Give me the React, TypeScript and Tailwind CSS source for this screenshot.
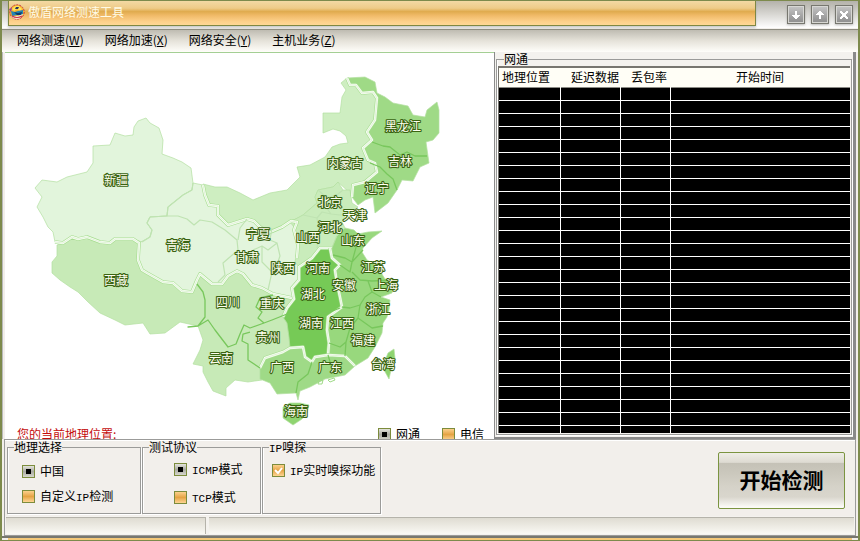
import { useState, type ReactNode } from 'react';
import clsx from 'clsx';

const menus = [
    { title: '网络测速', hotkey: 'W' },
    { title: '网络加速', hotkey: 'X' },
    { title: '网络安全', hotkey: 'Y' },
    { title: '主机业务', hotkey: 'Z' },
];

const regions = [
    {
        // Xinjiang
        fill: '#e2f5dc',
        d: 'M42 180L35 188L42 197L37 207L43 217L48 227L53 232L55 242L63 243L72 237L78 239L87 237L100 242L110 243L115 239L133 239L142 242L150 237L152 230L147 223L150 217L167 216L168 207L183 195L192 190L193 183L191 168L182 162L173 158L162 154L163 140L159 128L150 123L146 118L138 121L134 127L133 135L125 136L115 133L110 145L93 146L93 163L87 172L67 177L57 182Z',
    },
    {
        // Qinghai, Gansu, Ningxia, Shaanxi
        fill: '#e3f5dd',
        d: 'M139 243L150 237L152 230L147 223L150 217L167 216L168 207L183 195L192 190L193 183L203 185L205 195L209 205L218 206L218 215L228 225L247 219L260 224L268 233L282 227L291 221L297 222L294 230L298 245L297 258L299 267L299 280L292 288L294 298L288 299L273 294L262 289L252 285L243 274L237 271L228 276L222 284L212 284L200 274L197 280L192 292L182 291L173 283L163 282L147 273L142 270L138 260Z',
    },
    {
        // Inner Mongolia
        fill: '#ceeec1',
        d: 'M203 184L215 187L227 187L240 193L253 200L270 193L287 190L300 177L297 167L310 165L325 157L332 147L340 144L348 143L346 136L340 131L333 129L323 133L323 113L340 113L342 97L346 90L341 83L347 78L350 85L356 85L362 93L373 92L377 98L375 120L367 132L372 140L363 148L368 160L375 163L377 172L365 182L353 185L352 195L338 182L333 187L318 190L315 197L317 203L303 215L290 222L282 227L268 233L260 227L254 220L247 218L228 225L218 215L218 207L209 205L204 193Z',
    },
    {
        // Beijing, Tianjin, Hebei, Shanxi
        fill: '#c9ecbb',
        d: 'M317 203L315 197L318 190L333 187L338 182L343 190L350 190L352 203L358 207L353 212L346 214L342 222L345 228L337 235L332 248L320 248L312 258L299 267L295 262L298 245L294 227L290 222L303 215Z',
    },
    {
        // Heilongjiang, Jilin, Liaoning
        fill: '#9fda86',
        d: 'M347 78L365 77L375 82L377 93L385 97L393 103L408 106L413 115L425 117L427 110L437 102L439 110L439 133L433 140L426 142L429 163L420 167L417 173L413 181L402 180L397 190L388 203L375 213L373 197L365 200L358 205L352 197L353 185L365 182L377 172L375 163L368 160L363 148L372 140L367 132L375 120L377 98L373 92L362 93L356 85L350 85Z',
    },
    {
        // Tibet, Sichuan, Yunnan, Guizhou, Chongqing
        fill: '#c7eab7',
        d: 'M57 245L63 243L72 238L78 240L87 238L100 242L110 243L115 240L133 240L139 243L138 260L142 270L147 273L163 282L173 283L182 291L192 292L197 282L200 274L212 284L222 284L228 276L237 271L243 274L252 285L262 288L273 294L288 299L294 299L287 308L283 317L287 323L289 337L290 348L283 352L265 358L260 367L262 380L248 382L235 380L226 388L226 396L213 391L208 382L203 372L203 366L193 364L200 350L203 340L198 326L180 322L165 333L150 334L143 323L125 325L115 320L100 313L88 302L78 292L70 287L60 280L52 273L52 262L57 256Z',
    },
    {
        // Shandong, Jiangsu, Anhui, Shanghai, Zhejiang, Jiangxi, Fujian
        fill: '#98d87d',
        d: 'M332 248L337 236L345 228L354 230L358 234L368 232L382 231L372 238L363 248L362 252L367 260L377 266L385 279L394 280L392 293L381 297L390 300L389 310L387 317L383 323L382 333L375 347L368 358L355 366L345 356L328 355L327 317L342 307L337 283L335 270L340 265L332 258Z',
    },
    {
        // Henan, Hubei, Hunan
        fill: '#76ca56',
        d: 'M320 248L330 248L332 258L340 265L335 270L337 283L340 297L342 307L328 317L327 330L329 343L328 355L315 357L312 362L305 357L303 347L290 348L289 337L287 323L283 317L287 308L295 300L292 288L299 280L299 267L312 258Z',
    },
    {
        // Guangxi, Guangdong
        fill: '#9fda87',
        d: 'M260 368L265 358L283 352L290 348L303 347L305 357L312 362L315 357L328 355L345 356L355 366L345 375L325 379L310 387L300 391L298 400L296 393L277 394L270 383L260 379Z',
    },
    {
        // Hainan
        fill: '#8fd470',
        d: 'M283 407L290 403L300 403L309 405L307 413L302 419L293 425L283 418Z',
    },
    {
        // Taiwan
        fill: '#8fd470',
        d: 'M394 349L388 353L384 363L384 370L389 379L391 370L395 358Z',
    },
];

// white seams between the large areas
const seams = [
    'M55 242L63 243L72 237L78 239L87 237L100 242L110 243L115 239L133 239L139 243L138 260L142 270L147 273L163 282L173 283L182 291L192 292L197 280L200 274L212 284L222 284L228 276L237 271L243 274L252 285L262 288L273 294L292 298',
    'M203 185L205 195L209 205L218 206L218 215L228 225L247 219L254 221L260 227L268 233L282 227L291 221L297 222L294 230L298 245L297 258',
    'M347 78L350 85L356 85L362 93L373 92L377 98L375 120L367 132L372 140L363 148L368 160L375 163L377 172L365 182L353 185L352 197',
    'M332 248L320 248L312 258L299 267L299 280L292 288L294 299L287 308L283 317',
    'M330 248L332 258L340 265L335 270L337 283L340 297L342 307L328 317L327 330L329 343L328 355',
    'M260 368L265 358L283 352L290 348L303 347L305 357L312 362L315 357L328 355L345 356L355 366',
];

const paleLines = [
    'M193 183L192 190L183 195L168 207L167 216L150 217L147 223L152 230L150 237L142 242',
    'M167 216L178 216L187 219L194 225L200 220L212 222L225 230L237 240L238 250L223 263L225 275L218 282',
    'M247 219L240 228L238 240M253 250L262 246L268 250L277 243L270 240L272 228M262 246L262 262L272 272L268 290M277 243L280 256L275 270',
    'M317 203L325 206L331 214L340 215L346 214M318 190L327 198L338 194L343 190M303 215L317 218L322 212L331 214M317 218L319 232L317 248',
];

const greenLines = [
    'M372 142L383 146L390 147L400 155L407 152L415 156L427 156',
    'M370 163L380 167L387 174L393 179L397 190',
    'M197 284L203 292L205 300L205 317L198 326L188 327L198 326L208 320L215 330L228 347L236 344L240 334L244 325L250 328L264 323L272 320L287 314',
    'M273 295L260 298L256 307L262 312L258 318L264 323M250 332L243 334L242 341L248 344L248 360L260 368',
    'M290 308L300 311L310 308L325 314L340 308',
    'M340 265L350 272L352 262L363 250M333 255L345 258L352 262L358 240M352 272L360 280L372 281L392 280M342 307L350 308L360 305L365 297L372 292L368 281',
    'M360 305L358 318L372 328L383 326M372 292L381 297M358 318L350 328L346 342L345 356M329 343L340 347L346 342',
    'M312 362L308 374L298 382L296 393M328 355L331 365L342 369',
];

const labels: [string, number, number][] = [
    ['新疆', 116, 185],
    ['西藏', 116, 285],
    ['青海', 178, 250],
    ['黑龙江', 403, 131],
    ['吉林', 400, 166],
    ['内蒙古', 345, 168],
    ['辽宁', 377, 193],
    ['北京', 330, 207],
    ['天津', 355, 220],
    ['河北', 330, 232],
    ['山西', 308, 242],
    ['山东', 353, 245],
    ['宁夏', 258, 239],
    ['甘肃', 247, 262],
    ['陕西', 283, 273],
    ['河南', 318, 273],
    ['江苏', 373, 272],
    ['安徽', 344, 290],
    ['上海', 386, 290],
    ['湖北', 313, 299],
    ['浙江', 378, 314],
    ['重庆', 272, 308],
    ['四川', 228, 307],
    ['湖南', 311, 328],
    ['江西', 342, 328],
    ['贵州', 268, 342],
    ['福建', 363, 345],
    ['广西', 282, 372],
    ['广东', 330, 372],
    ['台湾', 383, 369],
    ['海南', 296, 416],
    ['云南', 221, 363],
];

const rows = Array.from({ length: 27 }, (_, i) => i);

function AppIcon() {
    return (
        <svg viewBox="0 0 16 16" className="h-4 w-4" aria-hidden="true">
            <circle cx="8" cy="8" r="7.2" fill="#f7b52c" stroke="#c2334d" strokeWidth="1" strokeDasharray="2 1" />
            <path d="M3 5Q6 1 10 2L13 5L11 7L8 5L5 7Z" fill="#ffe45c" />
            <path d="M7 3L10 3L9 5L6 5Z" fill="#26345e" />
            <path d="M2 7L6 8L9 7L14 6L14 10Q11 12 8 11L3 12Z" fill="#2386b5" />
            <path d="M5 8L9 9L13 8L12 11L8 11Z" fill="#143c69" />
            <path d="M2 12Q8 13 14 10Q12 15 8 15Q4 15 2 12Z" fill="#f4e9d6" />
            <path d="M3 12Q8 15 13 12" fill="none" stroke="#d0324a" strokeWidth="1.2" />
            <path d="M0 5L3 4L2 8Z" fill="#8a3ba0" />
        </svg>
    );
}

function WindowButton({ label, children }: { label: string; children: ReactNode }) {
    return (
        <button
            type="button"
            aria-label={label}
            className="flex h-[19px] w-[18px] items-center justify-center border border-[#77776f] bg-linear-to-b from-[#c5c5c5] to-[#8d8d8d] shadow-[inset_0_0_0_1px_#d7d7d3,0_1px_2px_#8888]"
        >
            <svg viewBox="0 0 10 10" className="h-[10px] w-[10px]" fill="#fff" shapeRendering="crispEdges">
                {children}
            </svg>
        </button>
    );
}

type OptionProps = {
    type?: 'radio' | 'checkbox';
    name: string;
    checked: boolean;
    onChange: () => void;
    children: ReactNode;
};

function Option({ type = 'radio', name, checked, onChange, children }: OptionProps) {
    return (
        <label className="flex h-[14px] items-center gap-[5px] leading-[14px] whitespace-nowrap">
            <span className="relative flex">
                <input
                    type={type}
                    name={name}
                    checked={checked}
                    onChange={onChange}
                    className={clsx(
                        'h-[13px] w-[13px] appearance-none border border-[#7c8c3c] bg-linear-to-b',
                        type === 'radio' && checked
                            ? 'from-[#e4e4dc] via-[#aaaaa2] to-[#d6d6cc]'
                            : 'from-[#fbd08a] via-[#e5a443] to-[#fdd592]'
                    )}
                />
                {checked && type === 'radio' && (
                    <span className="pointer-events-none absolute inset-1 bg-black" />
                )}
                {checked && type === 'checkbox' && (
                    <svg viewBox="0 0 13 13" className="pointer-events-none absolute inset-0" fill="none">
                        <path d="M3 6L6 9L10 4" stroke="#fff" strokeWidth="2" />
                    </svg>
                )}
            </span>
            <span>{children}</span>
        </label>
    );
}

function Latin({ children }: { children: ReactNode }) {
    return <span className="font-['Liberation_Mono',monospace] text-[11px] leading-none">{children}</span>;
}

function GroupBox({ title, className, children }: { title: ReactNode; className?: string; children: ReactNode }) {
    return (
        <fieldset
            className={clsx(
                'min-w-0 border border-[#9b9b99] shadow-[1px_1px_0_#fff,inset_1px_0_0_#fff]',
                className
            )}
        >
            <legend className="ml-[6px] h-[14px] leading-[14px]">{title}</legend>
            {children}
        </fieldset>
    );
}

function ChinaMap() {
    return (
        <svg viewBox="5 53 490 374" className="block h-[374px] w-[490px]" role="img" aria-label="中国">
            {regions.map((r) => (
                <path key={r.d} d={r.d} fill={r.fill} stroke="#b3dfa1" strokeWidth="0.7" strokeLinejoin="round" />
            ))}
            <g fill="none" strokeLinejoin="round">
                {seams.map((d) => (
                    <g key={d}>
                        <path d={d} stroke="#a5dc8e" strokeWidth="3.6" />
                        <path d={d} stroke="#f6fdf2" strokeWidth="2.4" />
                        <path d={d} stroke="#d3ecc7" strokeWidth="0.6" />
                    </g>
                ))}
                {paleLines.map((d) => (
                    <path key={d} d={d} stroke="#bfe3b2" strokeWidth="1.2" />
                ))}
                {greenLines.map((d) => (
                    <path key={d} d={d} stroke="#78c75c" strokeWidth="1.3" />
                ))}
                <path d="M319 381L323 380L322 384L318 384ZM328 380L334 378L335 380L330 382Z" stroke="#9fda87" />
            </g>
            <g
                fill="#fffff0"
                stroke="#3a6412"
                strokeWidth="2.2"
                strokeLinejoin="round"
                textAnchor="middle"
                fontSize="12"
                style={{ paintOrder: 'stroke' }}
            >
                {labels.map(([name, x, y]) => (
                    <text key={name} x={x} y={y}>
                        {name}
                    </text>
                ))}
            </g>
        </svg>
    );
}

export default function App() {
    const [area, setArea] = useState('china');
    const [protocol, setProtocol] = useState('icmp');
    const [line, setLine] = useState('cnc');
    const [sniff, setSniff] = useState(true);

    return (
        <div className="flex min-h-screen flex-col border-x-2 border-b border-[#7d8a4c] bg-[#f2efeb] font-['Noto_Sans_CJK_SC',sans-serif] text-xs text-black">
            <header className="flex h-[28px] justify-between border-t border-[#7d8a4c] bg-linear-to-b from-[#b4b2aa] to-white pl-[6px]">
                <div className="flex h-[25px] flex-1 items-center gap-[3px] border-r border-b border-l border-[#7f8742] bg-[linear-gradient(#f3d9a4_0%,#eecb88_30%,#e0ab4e_44%,#f0ba68_60%,#fdd08a_85%,#ffd795_100%)] pb-[2px] shadow-[0_2px_2px_#8886]">
                    <AppIcon />
                    <h1 className="text-[#fffbe6]">傲盾网络测速工具</h1>
                </div>
                <div className="flex w-[102px] justify-end gap-[6px] pt-1 pr-[5px]">
                    <WindowButton label="最小化">
                        <path d="M4 1H6V5H9V6H8V7H7V8H6V9H4V8H3V7H2V6H1V5H4Z" />
                    </WindowButton>
                    <WindowButton label="最大化">
                        <path d="M4 9H6V5H9V4H8V3H7V2H6V1H4V2H3V3H2V4H1V5H4Z" />
                    </WindowButton>
                    <WindowButton label="关闭">
                        <path d="M1 1H3V2H4V3H6V2H7V1H9V3H8V4H7V6H8V7H9V9H7V8H6V7H4V8H3V9H1V7H2V6H3V4H2V3H1Z" />
                    </WindowButton>
                </div>
            </header>

            <nav className="mt-px flex h-[23px] items-center gap-[21px] border-t border-[#8d8c80] bg-linear-to-b from-[#bfbcb2] via-[#e6e3da] to-[#fffefa] pb-[2px] pl-[15px]">
                {menus.map((menu) => (
                    <button key={menu.hotkey} type="button">
                        {menu.title}(<u>{menu.hotkey}</u>)
                    </button>
                ))}
            </nav>

            <main className="flex h-[387px] border-l border-[#b8b8b8] pr-[2px] pl-[2px]">
                <section className="min-w-0 flex-1 overflow-hidden border-t border-[#a4cf94] bg-white">
                    <ChinaMap />
                    <div className="flex h-3 items-start overflow-hidden pr-[10px] pl-3">
                        <p className="flex-1 leading-[14px] text-[#c40c0c]">您的当前地理位置:</p>
                        <div className="flex gap-[22px]">
                            <Option name="line" checked={line === 'cnc'} onChange={() => setLine('cnc')}>
                                网通
                            </Option>
                            <Option name="line" checked={line === 'tel'} onChange={() => setLine('tel')}>
                                电信
                            </Option>
                        </div>
                    </div>
                </section>

                <section className="w-[362px] border-r-3 border-b-2 border-l border-[#8a8a8a] bg-[#f4f2ee] px-px">
                    <GroupBox title="网通" className="h-[383px] px-px">
                        <div className="h-[367px] overflow-hidden border-t-2 border-l border-[#77756f]">
                            <table className="w-full table-fixed border-collapse bg-black">
                                <thead className="bg-[#fffef6]">
                                    <tr className="h-[19px] leading-[14px]">
                                        <th className="w-[61px] p-0 pl-[3px] text-left font-normal">地理位置</th>
                                        <th className="w-[60px] p-0 pr-px text-right font-normal">延迟数据</th>
                                        <th className="w-[50px] p-0 pl-[11px] text-left font-normal">丢包率</th>
                                        <th className="p-0 font-normal">开始时间</th>
                                    </tr>
                                </thead>
                                <tbody>
                                    {rows.map((row) => (
                                        <tr key={row} className="h-[13px] border-b border-white first:border-t first:border-t-[#8a8a84]">
                                            <td className="border-r border-white p-0" />
                                            <td className="border-r border-white p-0" />
                                            <td className="border-r border-white p-0" />
                                            <td className="p-0" />
                                        </tr>
                                    ))}
                                </tbody>
                            </table>
                        </div>
                    </GroupBox>
                </section>
            </main>

            <section className="mr-[2px] ml-[2px] flex h-[77px] border-t border-r border-l border-[#9b9b99] pl-[2px] shadow-[inset_0_1px_0_#fff]">
                <GroupBox title="地理选择" className="h-[74px] w-[134px]">
                    <div className="flex flex-col gap-[11px] pt-[10px] pl-[14px]">
                        <Option name="area" checked={area === 'china'} onChange={() => setArea('china')}>
                            中国
                        </Option>
                        <Option name="area" checked={area === 'custom'} onChange={() => setArea('custom')}>
                            自定义<Latin>IP</Latin>检测
                        </Option>
                    </div>
                </GroupBox>
                <GroupBox title="测试协议" className="ml-px h-[74px] w-[119px]">
                    <div className="flex flex-col gap-[14px] pt-[8px] pl-[31px]">
                        <Option name="protocol" checked={protocol === 'icmp'} onChange={() => setProtocol('icmp')}>
                            <Latin>ICMP</Latin>模式
                        </Option>
                        <Option name="protocol" checked={protocol === 'tcp'} onChange={() => setProtocol('tcp')}>
                            <Latin>TCP</Latin>模式
                        </Option>
                    </div>
                </GroupBox>
                <GroupBox title={<><Latin>IP</Latin>嗅探</>} className="ml-px h-[74px] w-[119px]">
                    <div className="pt-[9px] pl-[9px]">
                        <Option type="checkbox" name="sniff" checked={sniff} onChange={() => setSniff(!sniff)}>
                            <Latin>IP</Latin>实时嗅探功能
                        </Option>
                    </div>
                </GroupBox>
                <button
                    type="button"
                    className="mt-3 mr-[10px] ml-auto h-[57px] w-[127px] rounded-[2px] border border-[#7b9440] bg-[linear-gradient(#eeede6_0%,#dedbd2_17%,#c5c2b7_19%,#cac7bc_35%,#d5d2c8_60%,#d9d6cd_80%,#fbfaf6_98%)] pb-1 text-[21px] font-bold"
                >
                    开始检测
                </button>
            </section>

            <footer className="mr-[2px] ml-[2px] flex h-[20px] border-r border-b border-l border-[#9b9b99] bg-[#f4f2ee] p-px">
                <div className="w-[200px] border-t border-r border-[#b5b3aa] bg-linear-to-b from-[#dfdcd2] to-[#faf9f4]" />
                <div className="ml-[3px] flex-1 border-t border-[#b5b3aa] bg-linear-to-b from-[#dfdcd2] to-[#faf9f4]" />
            </footer>
            <div className="h-[2px] bg-[#77776f]" />
            <div className="mr-[6px] ml-[6px] min-h-[2px] flex-1 bg-[#f5c878]" />
        </div>
    );
}
